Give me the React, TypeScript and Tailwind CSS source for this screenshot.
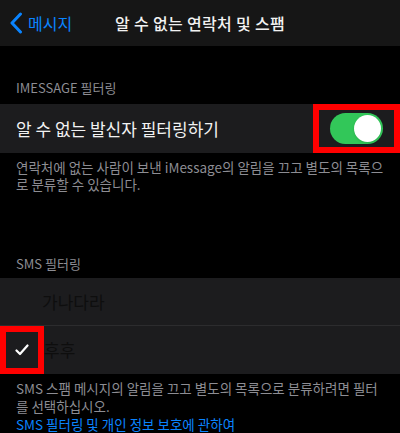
import React from "react";

const font = { fontFamily: '"Noto Sans CJK KR", "Noto Sans", sans-serif' };

export default function App() {
  return (
    <div className="w-[400px] h-[433px] overflow-hidden bg-black text-white" style={font}>
      {/* Nav bar */}
      <div className="h-[46px] bg-[#161616] grid grid-cols-[1fr_auto_1fr] items-center">
        <div className="flex items-center pl-[9px] text-[#0a84ff]">
          <svg width="14" height="22" viewBox="0 0 14 22" fill="none">
            <path d="M11.5 2 L3 11 L11.5 20" stroke="#0a84ff" strokeWidth="3" strokeLinecap="round" strokeLinejoin="round" />
          </svg>
          <span className="ml-[5px] text-[16px] leading-none">메시지</span>
        </div>
        <div className="text-[16px] font-medium tracking-[0.02em] leading-none text-[#f2f2f2]">알 수 없는 연락처 및 스팸</div>
        <div />
      </div>

      {/* iMessage section */}
      <div className="pt-[33px] pb-[7px] px-4 text-[13px] leading-[18px] text-[#8d8d93]">IMESSAGE 필터링</div>
      <div className="h-[49px] bg-[#1c1c1e] flex items-center justify-between pl-4">
        <span className="text-[17px] text-[#f2f2f2]">알 수 없는 발신자 필터링하기</span>
        <div className="h-[49px] w-[87px] border-[6px] border-[#ff0000] flex items-center justify-center">
          <div className="w-[53px] h-[31px] rounded-full bg-[#32c759] flex items-center justify-end p-[2px]">
            <div className="w-[27px] h-[27px] rounded-full bg-white shadow" />
          </div>
        </div>
      </div>
      <div className="px-4 pt-[6px] text-[13.5px] leading-[17px] text-[#8d8d93] break-all">
        연락처에 없는 사람이 보낸 iMessage의 알림을 끄고 별도의 목록으로 분류할 수 있습니다.
      </div>

      {/* SMS section */}
      <div className="pt-[62px] pb-[5px] px-4 text-[13px] leading-[18px] text-[#8d8d93]">SMS 필터링</div>
      <div className="bg-[#1c1c1e]">
        <div className="h-[48px] flex items-center pl-[42px] text-[17px] text-[#0e0e0e] border-b border-[#2c2c2e]">
          가나다라
        </div>
        <div className="h-[48px] flex items-center">
          <div className="w-[44px] h-[48px] border-[6px] border-[#ff0000] flex items-center justify-center">
            <svg width="14" height="12" viewBox="0 0 14 12" fill="none">
              <path d="M1.5 6.5 L5 10 L12.5 1.5" stroke="white" strokeWidth="2.2" strokeLinecap="round" strokeLinejoin="round" />
            </svg>
          </div>
          <span className="text-[17px] text-[#0e0e0e]">후후</span>
        </div>
      </div>
      <div className="px-4 pt-[5px] text-[13.5px] leading-[18px] text-[#8d8d93] break-all">
        <div>SMS 스팸 메시지의 알림을 끄고 별도의 목록으로 분류하려면 필터를 선택하십시오.</div>
        <div className="text-[#0a84ff]">SMS 필터링 및 개인 정보 보호에 관하여</div>
      </div>
    </div>
  );
}
